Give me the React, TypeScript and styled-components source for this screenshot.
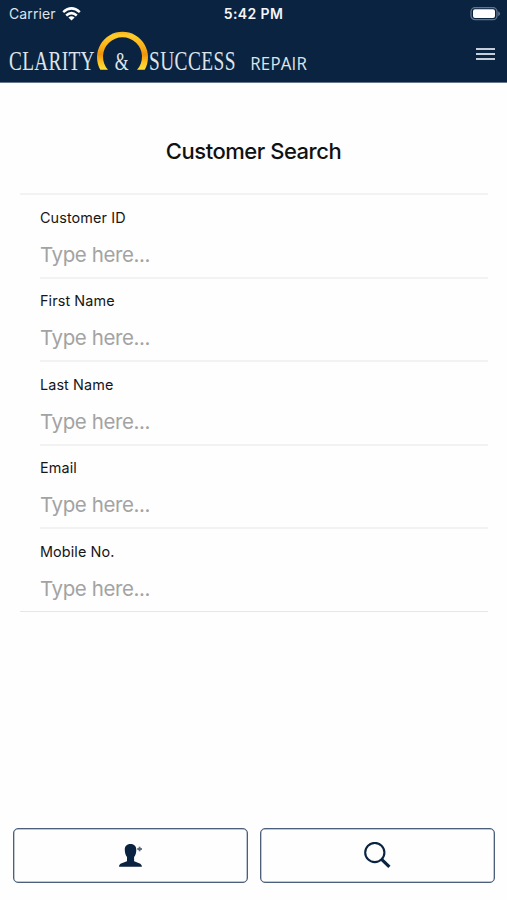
import React from 'react';
import styled, { createGlobalStyle } from 'styled-components';

const NAVY = '#0a2340';

const GlobalStyle = createGlobalStyle`
  * { box-sizing: border-box; }
  body { margin: 0; background: #fefefe; font-family: Inter, "Liberation Sans", sans-serif; }
`;

const Screen = styled.div`
  display: flex;
  flex-direction: column;
  height: 900px;
  overflow: hidden;
`;

const Header = styled.header`
  display: flex;
  flex-direction: column;
  height: 83px;
  background: ${NAVY};
  border-bottom: 1px solid #65778a;
  color: #f4f6f9;
`;

const StatusBar = styled.div`
  display: grid;
  grid-template-columns: 1fr auto 1fr;
  align-items: center;
  height: 28px;
  padding: 0 6px 0 9px;
`;

const Carrier = styled.div`
  display: flex;
  align-items: center;
  gap: 6px;
  font-size: 14px;
  line-height: 18px;
  color: #dde3ea;
  letter-spacing: 0.1px;
`;

const Clock = styled.div`
  margin-left: -3px;
  font-size: 14px;
  font-weight: 600;
  line-height: 18px;
  letter-spacing: 0.4px;
`;

const BatterySlot = styled.div`
  display: flex;
  justify-content: flex-end;
`;

const NavBar = styled.div`
  display: flex;
  justify-content: space-between;
  height: 54px;
  padding-right: 12px;
`;

const MenuButton = styled.button`
  display: flex;
  flex-direction: column;
  gap: 3px;
  width: 19px;
  margin: 20px 0 0;
  padding: 0;
  border: 0;
  background: none;
`;

const MenuLine = styled.span`
  height: 2px;
  background: #c6cddb;
`;

const Title = styled.h1`
  margin: 54px 0 0;
  font-size: 22px;
  font-weight: 500;
  line-height: 28px;
  letter-spacing: -0.48px;
  text-align: center;
  color: #111;
`;

const Form = styled.form`
  display: flex;
  flex-direction: column;
  margin: 28px 19px 0 20px;
  border-top: 2px solid #f2f2f2;
  border-bottom: 1px solid #e6e6e6;
`;

const Field = styled.label`
  display: flex;
  flex-direction: column;
  height: 83.5px;
  margin-left: 20px;
  padding-top: 12.5px;
  border-bottom: 2px solid #f2f2f2;

  &:last-child { height: 82px; border-bottom: 0; }
`;

const FieldName = styled.span`
  font-size: 14.4px;
  line-height: 20px;
  letter-spacing: 0.1px;
  color: #161616;
`;

const Input = styled.input`
  height: 30px;
  margin-top: 12px;
  padding: 0;
  border: 0;
  outline: 0;
  background: transparent;
  font: 20.5px/30px Inter, "Liberation Sans", sans-serif;
  letter-spacing: -0.4px;
  color: #161616;

  &::placeholder { color: #a3a3a3; opacity: 1; }
`;

const Actions = styled.footer`
  display: grid;
  grid-template-columns: 1fr 1fr;
  gap: 12px;
  margin-top: auto;
  padding: 0 12px 17px 13px;
`;

const ActionButton = styled.button`
  display: flex;
  align-items: center;
  justify-content: center;
  height: 55px;
  padding: 0;
  border: 1.5px solid #4d607b;
  border-radius: 5px;
  background: #fefefe;
  box-shadow: inset 0 0 0 0.5px #8190a5;
`;

const WifiIcon = () => (
  <svg width="19" height="14" viewBox="0 0 19 14" fill="none" stroke="#fff" strokeWidth="2.5">
    <path d="M1.2 5.2Q9.5-2.4 17.8 5.2" />
    <path d="M4.2 8.5Q9.5 3.7 14.8 8.5" />
    <path d="M9.5 13.5 6.4 10.5Q9.5 7.8 12.6 10.5Z" fill="#fff" stroke="none" />
  </svg>
);

const BatteryIcon = () => (
  <svg width="31" height="15" viewBox="0 0 31 15">
    <rect x="1" y=".7" width="26" height="12" rx="4" fill="none" stroke="#64758b" strokeWidth="1.3" />
    <rect x="3" y="2.3" width="22" height="8.8" rx="2" fill="#fff" />
    <path d="M28.2 4.2Q32 6.7 28.2 9.2Z" fill="#64758b" />
  </svg>
);

const Logo = () => (
  <svg width="320" height="54" viewBox="0 0 320 54" fill="#dfe4ea">
    <defs>
      <linearGradient id="gold" x1="0" y1="0" x2="0" y2="1">
        <stop offset="0" stopColor="#f8b31b" />
        <stop offset=".1" stopColor="#ffcc2b" />
        <stop offset=".35" stopColor="#fbb51a" />
        <stop offset=".6" stopColor="#f0930d" />
        <stop offset=".8" stopColor="#ffc322" />
        <stop offset="1" stopColor="#ffe03a" />
      </linearGradient>
    </defs>
    <path
      d="M100.3 41.8A25.5 25.5 0 1 1 144.7 41.8H137A19.5 19.5 0 1 0 108 41.8Z"
      fill="url(#gold)"
    />
    <g fontFamily="Liberation Serif, serif" fontSize="26.3">
      <text transform="translate(9 41.8) scale(.735 1)" letterSpacing=".4">CLARITY</text>
      <text transform="translate(114.7 41.8) scale(.7 1)" fontSize="25.5">&amp;</text>
      <text transform="translate(149 41.8) scale(.735 1)" letterSpacing=".6">SUCCESS</text>
    </g>
    <text
      transform="translate(250.3 41.8) scale(.91 1)"
      fontFamily="Open Sans, sans-serif"
      fontSize="18.5"
      fontWeight="500"
      letterSpacing=".2"
    >
      REPAIR
    </text>
  </svg>
);

const AddPersonIcon = () => (
  <svg width="24" height="24" viewBox="0 0 24 24" fill={NAVY}>
    <path d="M11.5 0C7.6 0 5.6 2.3 5.8 6.2C5.9 9.2 6.8 11.5 8 13V17C7.3 18.4 .8 18.4 .1 21.8V22.8H22.8V21.8C21.9 18.4 15.9 18.4 15.1 17V13C16.4 11.5 17.2 9.2 17.3 6.2C17.4 2.3 15.4 0 11.5 0Z" />
    <path d="M20.6 2.7V7.3M18.3 5H22.9" stroke="#5c6a7d" strokeWidth="1.8" />
  </svg>
);

const SearchIcon = () => (
  <svg width="28" height="28" viewBox="0 0 28 28" fill="none" stroke={NAVY}>
    <circle cx="10.8" cy="10.5" r="9.6" strokeWidth="2.1" />
    <path d="M17.6 17.3 25.4 24.8" strokeWidth="3.2" />
  </svg>
);

const FIELDS = ['Customer ID', 'First Name', 'Last Name', 'Email', 'Mobile No.'];

export default function App() {
  return (
    <Screen>
      <GlobalStyle />
      <Header>
        <StatusBar>
          <Carrier>Carrier <WifiIcon /></Carrier>
          <Clock>5:42 PM</Clock>
          <BatterySlot><BatteryIcon /></BatterySlot>
        </StatusBar>
        <NavBar>
          <Logo />
          <MenuButton type="button" aria-label="Menu">
            <MenuLine /><MenuLine /><MenuLine />
          </MenuButton>
        </NavBar>
      </Header>
      <Title>Customer Search</Title>
      <Form>
        {FIELDS.map((name) => (
          <Field key={name}>
            <FieldName>{name}</FieldName>
            <Input placeholder="Type here..." />
          </Field>
        ))}
      </Form>
      <Actions>
        <ActionButton type="button" aria-label="Add customer"><AddPersonIcon /></ActionButton>
        <ActionButton type="button" aria-label="Search"><SearchIcon /></ActionButton>
      </Actions>
    </Screen>
  );
}
